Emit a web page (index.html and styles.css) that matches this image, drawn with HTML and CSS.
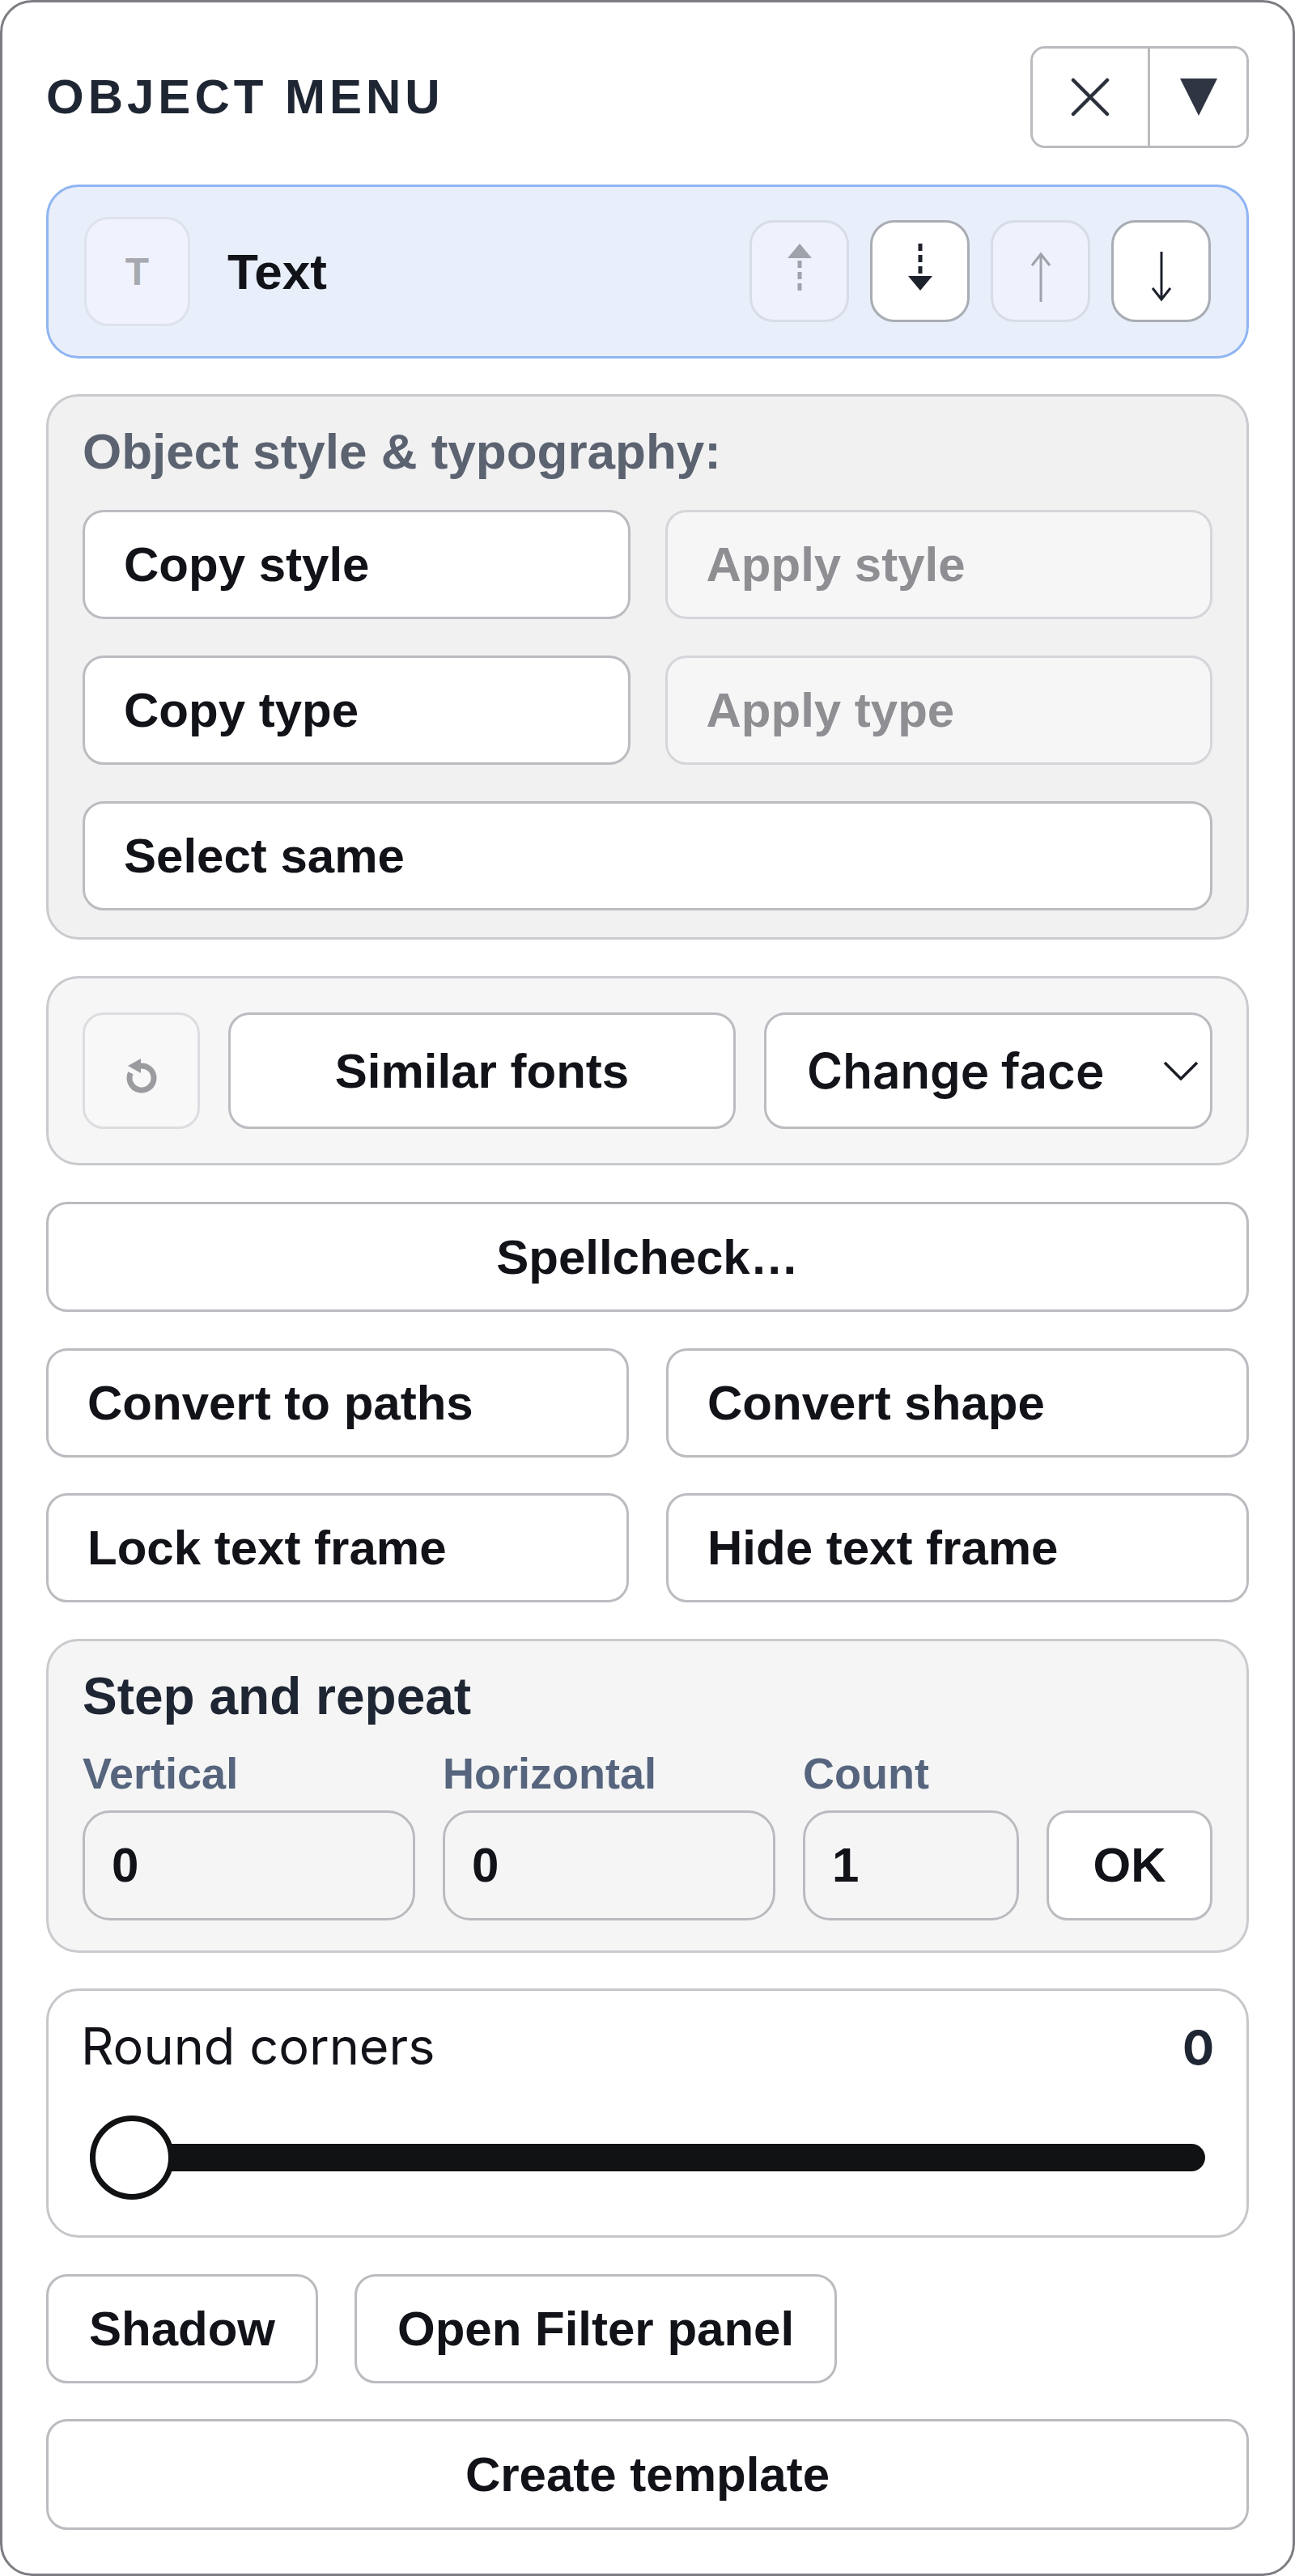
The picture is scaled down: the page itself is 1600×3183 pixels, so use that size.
FILE: index.html
```html
<!DOCTYPE html>
<html lang="en">
<head>
    <meta charset="UTF-8">
    <meta name="viewport" content="width=device-width, initial-scale=1.0">
    <title>Object menu</title>
    <link rel="stylesheet" href="styles.css">
</head>
<body>
    <div class="panel">
        <div class="panel-head">
            <h2 class="panel-title">OBJECT MENU</h2>
            <div class="head-tools">
                <button class="tool tool-close" title="Close">
                    <svg width="48" height="48" viewBox="0 0 48 48"><path d="M3 3 L45 45 M45 3 L3 45" stroke="#2b303b" stroke-width="4.5" stroke-linecap="round"/></svg>
                </button>
                <button class="tool tool-collapse" title="Collapse">
                    <svg width="46" height="46" viewBox="0 0 46 46"><path d="M0 0 H46 L23 46 Z" fill="#2f3542"/></svg>
                </button>
            </div>
        </div>

        <div class="object-card">
            <span class="type-badge">T</span>
            <span class="object-name">Text</span>
            <div class="order-btns">
                <!-- bring forward -->
                <button class="order-btn" disabled>
                    <svg class="arrow-dashed" width="32" height="58" viewBox="0 0 32 58"><path d="M16 0 L31 18 H1 Z" fill="#9ea2aa"/><path d="M16 21 V58" stroke="#9ea2aa" stroke-width="5" stroke-dasharray="9 5"/></svg>
                </button>
                <!-- send backward -->
                <button class="order-btn">
                    <svg class="arrow-dashed" width="32" height="58" viewBox="0 0 32 58"><path d="M16 0 V38" stroke="#1d222c" stroke-width="5" stroke-dasharray="9 5"/><path d="M1 40 H31 L16 58 Z" fill="#1d222c"/></svg>
                </button>
                <!-- bring to front -->
                <button class="order-btn" disabled>
                    <svg class="arrow-thin" width="28" height="62" viewBox="0 0 28 62"><path d="M14 3 V62 M3 17 L14 3 L25 17" stroke="#9ea2aa" stroke-width="3" fill="none"/></svg>
                </button>
                <!-- send to back -->
                <button class="order-btn">
                    <svg class="arrow-thin" width="28" height="62" viewBox="0 0 28 62"><path d="M14 0 V59 M3 45 L14 59 L25 45" stroke="#1d222c" stroke-width="3" fill="none"/></svg>
                </button>
            </div>
        </div>

        <section class="group style-group">
            <h3 class="group-title">Object style &amp; typography:</h3>
            <div class="pair pair-inner">
                <button class="btn btn-start">Copy style</button>
                <button class="btn btn-start" disabled>Apply style</button>
            </div>
            <div class="pair pair-inner">
                <button class="btn btn-start">Copy type</button>
                <button class="btn btn-start" disabled>Apply type</button>
            </div>
            <button class="btn btn-start">Select same</button>
        </section>

        <section class="group font-group">
            <button class="btn icon-btn" disabled>
                <svg width="50" height="50" viewBox="0 0 50 50"><path d="M22 13.3 A15 15 0 1 1 11.4 21.7" stroke="#9b9ca0" stroke-width="7" fill="none"/><path d="M8 13 L24 4 L24 22 Z" fill="#9b9ca0"/></svg>
            </button>
            <button class="btn similar">Similar fonts</button>
            <div class="face-select">
                <span>Change face</span>
                <svg width="44" height="24" viewBox="0 0 44 24"><path d="M2 2 L22 22 L42 2" stroke="#1b1e25" stroke-width="3.5" fill="none"/></svg>
            </div>
        </section>

        <button class="btn btn-tall">Spellcheck…</button>

        <div class="pair">
            <button class="btn btn-start">Convert to paths</button>
            <button class="btn btn-start">Convert shape</button>
        </div>
        <div class="pair">
            <button class="btn btn-start btn-low">Lock text frame</button>
            <button class="btn btn-start btn-low">Hide text frame</button>
        </div>

        <section class="group step-group">
            <h3 class="step-title">Step and repeat</h3>
            <div class="step-grid">
                <label class="field">
                    <span class="field-label">Vertical</span>
                    <input class="step-input" type="text" value="0">
                </label>
                <label class="field">
                    <span class="field-label">Horizontal</span>
                    <input class="step-input" type="text" value="0">
                </label>
                <label class="field">
                    <span class="field-label">Count</span>
                    <input class="step-input" type="text" value="1">
                </label>
                <button class="btn ok-btn">OK</button>
            </div>
        </section>

        <section class="group corner-group">
            <div class="corner-head">
                <span class="corner-label">Round corners</span>
                <span class="corner-value">0</span>
            </div>
            <input class="corner-range" type="range" min="0" max="100" value="0">
        </section>

        <div class="auto-row">
            <button class="btn btn-low">Shadow</button>
            <button class="btn btn-low">Open Filter panel</button>
        </div>

        <button class="btn btn-tall">Create template</button>
    </div>
</body>
</html>
```

FILE: styles.css
```css
body {
    margin: 0;
    background-color: #fff;
    font-family: "Liberation Sans", Arial, sans-serif;
    color: #111318;
}

.panel {
    box-sizing: border-box;
    width: 1600px;
    height: 3183px;
    border: 3px solid #7c7d82;
    border-radius: 40px;
    padding: 54px;
    display: flex;
    flex-direction: column;
    gap: 44.5px;
    background-color: #fff;
}

/* header */
.panel-head {
    display: flex;
    align-items: center;
    justify-content: space-between;
    height: 126px;
}

.panel-title {
    margin: 0;
    font: 700 60px/60px "Liberation Sans", Arial, sans-serif;
    letter-spacing: 5px;
    color: #1f2633;
}

.head-tools {
    display: flex;
    box-sizing: border-box;
    height: 126px;
    border: 3px solid #b9bbbf;
    border-radius: 18px;
    overflow: hidden;
}

.tool {
    display: flex;
    align-items: center;
    justify-content: center;
    padding: 0;
    border: 0;
    background-color: #fff;
}

.tool-close {
    width: 142px;
}

.tool-collapse {
    width: 122px;
    border-left: 3px solid #b9bbbf;
}

/* selected object */
.object-card {
    display: flex;
    align-items: center;
    box-sizing: border-box;
    height: 216px;
    padding: 0 44px;
    border: 3px solid #8fb5f3;
    border-radius: 40px;
    background-color: #e9eefb;
}

.type-badge {
    display: flex;
    align-items: center;
    justify-content: center;
    box-sizing: border-box;
    width: 131px;
    height: 135px;
    border: 3px solid #dde2ec;
    border-radius: 30px;
    background-color: #f0f3fd;
    font-size: 48px;
    font-weight: 700;
    color: #a6a9b0;
}

.object-name {
    margin-left: 46px;
    font-size: 62px;
    font-weight: 700;
}

.order-btns {
    display: flex;
    gap: 26px;
    margin-left: auto;
}

.order-btn {
    display: flex;
    align-items: center;
    justify-content: center;
    box-sizing: border-box;
    width: 123px;
    height: 126px;
    padding: 0;
    border: 3px solid #a9adb3;
    border-radius: 30px;
    background-color: #fff;
}

.order-btn:disabled {
    border-color: #d7dce6;
    background-color: #eff2fd;
}

.arrow-dashed {
    margin-bottom: 10px;
}

.arrow-thin {
    margin-top: 14px;
}

/* buttons */
.btn {
    box-sizing: border-box;
    height: 135px;
    padding: 0 48px;
    border: 3px solid #babcc0;
    border-radius: 26px;
    background-color: #fff;
    font: 700 60px "Liberation Sans", Arial, sans-serif;
    color: #111318;
    text-align: center;
    white-space: nowrap;
}

.btn-start {
    text-align: left;
}

.btn-tall {
    height: 137px;
}

.btn:disabled {
    border-color: #d4d6d9;
    background-color: #f6f6f7;
    color: #8e8e93;
}

.pair {
    display: grid;
    grid-template-columns: 1fr 1fr;
    gap: 46px;
}

.pair-inner {
    gap: 43px;
}

/* grouped boxes */
.group {
    box-sizing: border-box;
    border: 3px solid #c9cbce;
    border-radius: 40px;
    background-color: #f1f1f2;
}

.style-group {
    display: flex;
    flex-direction: column;
    gap: 45px;
    padding: 41px 42px 33px;
}

.group-title {
    margin: 0;
    font: 700 62px/54px "Liberation Sans", Arial, sans-serif;
    color: #5b6270;
}

.font-group {
    display: flex;
    gap: 35px;
    height: 235px;
    padding: 42px;
    background-color: #f6f6f7;
}

.font-group .btn {
    height: auto;
}

.icon-btn {
    display: flex;
    align-items: center;
    justify-content: center;
    width: 145px;
    padding: 0;
}

.font-group .icon-btn:disabled {
    border-color: #dcdde0;
    background-color: #f8f8f9;
}

.icon-btn svg {
    margin-top: 12px;
}

.similar {
    flex: 1;
    padding: 0;
}

.face-select {
    display: flex;
    align-items: center;
    justify-content: space-between;
    flex: 0 0 554px;
    box-sizing: border-box;
    padding: 0 14px 0 50px;
    border: 3px solid #babcc0;
    border-radius: 26px;
    background-color: #fff;
    font: 600 60px "Inter", "Liberation Sans", sans-serif;
    color: #12141a;
}

/* step and repeat */
.step-group {
    padding: 38px 42px 37px;
    background-color: #f5f5f6;
}

.step-title {
    margin: 0 0 39px;
    font: 700 64px/60px "Liberation Sans", Arial, sans-serif;
    color: #1f2633;
}

.step-grid {
    display: grid;
    grid-template-columns: 1.54fr 1.54fr 1fr 205px;
    column-gap: 34px;
    align-items: end;
}

.field {
    display: flex;
    flex-direction: column;
    gap: 20px;
}

.field-label {
    font: 700 54px/52px "Liberation Sans", Arial, sans-serif;
    color: #56657d;
}

.step-input {
    box-sizing: border-box;
    width: 100%;
    height: 136px;
    padding: 0 0 0 33px;
    border: 3px solid #b9bbbf;
    border-radius: 34px;
    background-color: #f5f5f6;
    font: 700 60px "Liberation Sans", Arial, sans-serif;
    color: #111318;
}

.ok-btn {
    height: 136px;
    padding: 0;
}

/* round corners */
.corner-group {
    padding: 37px 40px 43px;
    background-color: #fff;
    border-color: #c5c7ca;
}

.corner-head {
    display: flex;
    align-items: baseline;
    justify-content: space-between;
    line-height: 62px;
}

.corner-label {
    font: 400 63px/62px "Inter", sans-serif;
    color: #111318;
}

.corner-value {
    font: 700 58px/62px "Inter", sans-serif;
    color: #1f2633;
}

.corner-range {
    display: block;
    width: calc(100% - 22px);
    height: 107px;
    margin: 51px 11px 0;
    background: transparent;
    -webkit-appearance: none;
    appearance: none;
}

.corner-range::-webkit-slider-runnable-track {
    height: 34px;
    border-radius: 17px;
    background-color: #111214;
}

.corner-range::-webkit-slider-thumb {
    box-sizing: border-box;
    width: 104px;
    height: 104px;
    margin-top: -35px;
    border: 7px solid #111214;
    border-radius: 50%;
    background-color: #fff;
    -webkit-appearance: none;
}

/* bottom actions */
.auto-row {
    display: flex;
    gap: 45px;
}

.auto-row .btn {
    padding: 0 50px;
}
```
